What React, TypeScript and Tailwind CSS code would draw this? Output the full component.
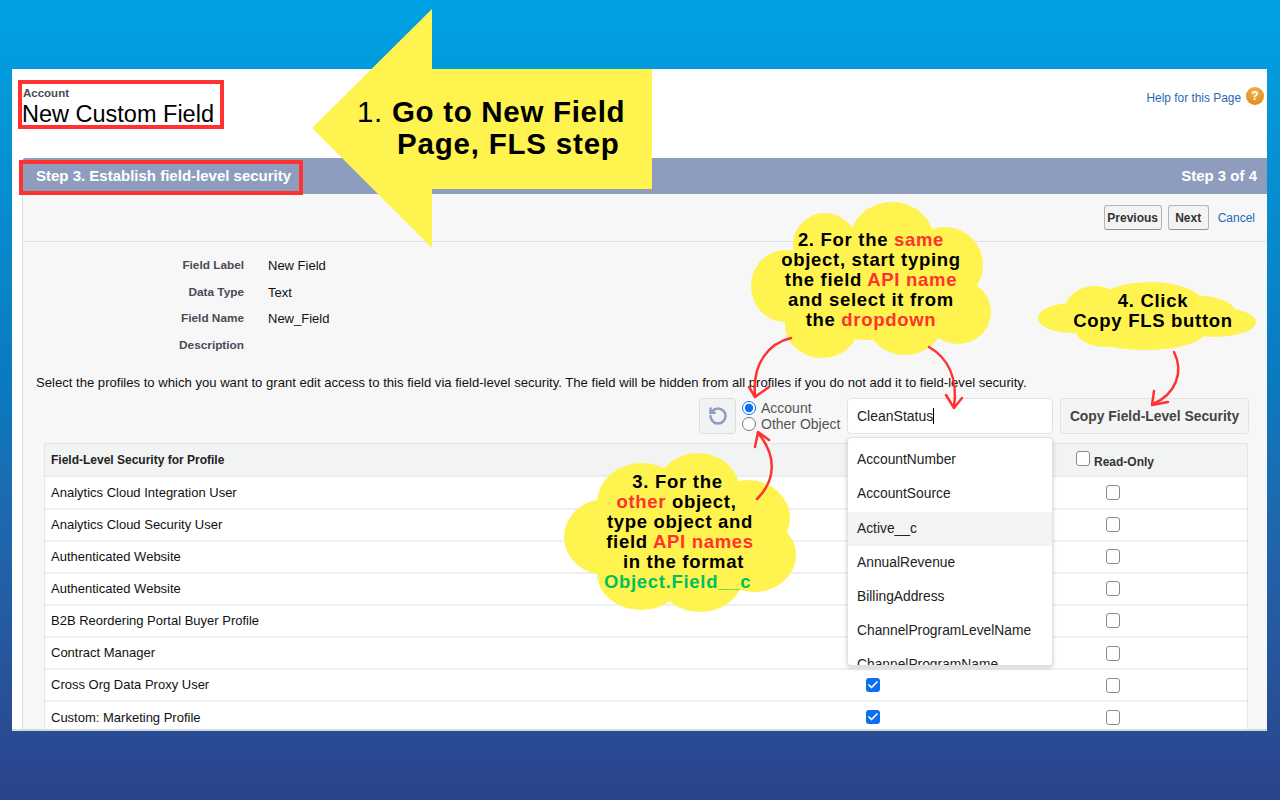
import { Check, RotateCcw } from 'lucide-react';

const profiles = [
  { name: 'Analytics Cloud Integration User', edit: true },
  { name: 'Analytics Cloud Security User', edit: true },
  { name: 'Authenticated Website', edit: true },
  { name: 'Authenticated Website', edit: true },
  { name: 'B2B Reordering Portal Buyer Profile', edit: true },
  { name: 'Contract Manager', edit: true },
  { name: 'Cross Org Data Proxy User', edit: true },
  { name: 'Custom: Marketing Profile', edit: true },
];

const fields = [
  ['Field Label', 'New Field'],
  ['Data Type', 'Text'],
  ['Field Name', 'New_Field'],
  ['Description', ''],
];

const options = [
  'AccountNumber',
  'AccountSource',
  'Active__c',
  'AnnualRevenue',
  'BillingAddress',
  'ChannelProgramLevelName',
  'ChannelProgramName',
];

const YELLOW = '#fff34f';
const RED = '#ff3131';

function Box({ checked = false }: { checked?: boolean }) {
  if (checked) {
    return (
      <span className="flex h-[14px] w-[14px] items-center justify-center rounded-[3px] bg-[#0b6ff2]">
        <Check className="h-[12px] w-[12px] text-white" strokeWidth={3.5} />
      </span>
    );
  }
  return <span className="block h-[15px] w-[14px] rounded-[3px] border border-[#8a8a8a] bg-white" />;
}

function Cloud({ blobs }: { blobs: number[][] }) {
  return (
    <>
      {blobs.map(([cx, cy, rx, ry], i) => (
        <ellipse key={i} cx={cx} cy={cy} rx={rx} ry={ry ?? rx} fill={YELLOW} />
      ))}
    </>
  );
}

function RedArrow({ d, head }: { d: string; head: string }) {
  return (
    <>
      <path d={d} fill="none" stroke={RED} strokeWidth={2.5} strokeLinecap="round" />
      <path d={head} fill="none" stroke={RED} strokeWidth={2.5} strokeLinecap="round" strokeLinejoin="round" />
    </>
  );
}

function Note({ className, lines }: { className: string; lines: React.ReactNode[] }) {
  return (
    <div className={`absolute z-30 text-center text-[18.5px] font-bold leading-[20px] tracking-[0.7px] text-black ${className}`}>
      {lines.map((line, i) => (
        <div key={i} className="whitespace-nowrap">
          {line}
        </div>
      ))}
    </div>
  );
}

export default function App() {
  return (
    <div className="relative h-[800px] w-[1280px] overflow-hidden bg-gradient-to-b from-[#00a2e3] via-[#0b78bd] to-[#2a438c] px-[12px] pt-[69px] font-['Liberation_Sans',sans-serif]">
      <div className="flex h-[662px] w-[1255px] flex-col overflow-hidden border-b-2 border-[#d5d9de] bg-white">
        <div className="flex h-[89px] shrink-0 items-start justify-between pl-[10px] pr-[3px]">
          <div className="pt-[18px]">
            <div className="pl-[1px] text-[11.5px] font-bold leading-[12px] text-[#4a4a56]">Account</div>
            <div className="mt-[1px] text-[23.5px] leading-[28px] text-black">New Custom Field</div>
          </div>
          <div className="flex items-start gap-[5px] pt-[18px]">
            <span className="mt-[3px] text-[11.9px] text-[#1f69b3]">Help for this Page</span>
            <span className="flex h-[18px] w-[18px] items-center justify-center rounded-full bg-[radial-gradient(circle_at_50%_30%,#f7b547,#d9800f)] text-[12px] font-bold text-white">
              ?
            </span>
          </div>
        </div>

        <div className="ml-[10px] flex h-[36px] shrink-0 items-center justify-between rounded-tl-[4px] bg-[#8e9dbe] pl-[14px] pr-[10px] text-[15px] font-bold text-white">
          <span>Step 3. Establish field-level security</span>
          <span>Step 3 of 4</span>
        </div>

        <div className="ml-[10px] flex-1 border-l border-[#dedede] bg-[#f7f7f7]">
          <div className="flex h-[48px] items-center justify-end border-b border-[#e0e0e0] pr-[12px]">
            <button className="h-[25px] w-[58px] rounded-[3px] border border-[#b5b5b5] border-b-[#8f8f8f] bg-[#f3f3f3] text-[12px] font-bold text-[#333]">
              Previous
            </button>
            <button className="ml-[6px] h-[25px] w-[41px] rounded-[3px] border border-[#b5b5b5] border-b-[#8f8f8f] bg-[#f3f3f3] text-[12px] font-bold text-[#333]">
              Next
            </button>
            <span className="ml-[9px] text-[12px] text-[#1f69b3]">Cancel</span>
          </div>

          <div className="pt-[10.5px]">
            {fields.map(([label, value]) => (
              <div key={label} className="flex h-[26.6px] items-center">
                <div className="w-[221px] text-right text-[11.8px] font-bold text-[#4a4a56]">{label}</div>
                <div className="pl-[24px] text-[13px] text-[#111]">{value}</div>
              </div>
            ))}
          </div>

          <p className="mt-[15px] h-[18px] pl-[13px] text-[13.1px] leading-[18px] text-[#111]">
            Select the profiles to which you want to grant edit access to this field via field-level security. The field
            will be hidden from all profiles if you do not add it to field-level security.
          </p>

          <div className="mt-[6.5px] flex h-[36px] justify-end pr-[18px]">
            <button className="flex h-[36px] w-[37px] items-center justify-center rounded-[4px] border border-[#dddddd] bg-[#f1f2f4]">
              <RotateCcw className="h-[20px] w-[20px] text-[#8e9dbe]" strokeWidth={3} />
            </button>
            <div className="ml-[6px] flex w-[105px] flex-col justify-center text-[14px] leading-[16px] text-[#555]">
              <label className="flex items-center gap-[5px]">
                <input type="radio" name="target" defaultChecked className="m-0 h-[14px] w-[14px] accent-[#0b6ff2]" />
                Account
              </label>
              <label className="flex items-center gap-[5px]">
                <input type="radio" name="target" className="m-0 h-[14px] w-[14px]" />
                Other Object
              </label>
            </div>
            <div className="relative z-10">
              <div className="flex h-[36px] w-[206px] items-center rounded-[4px] border border-[#e2e2e2] bg-white pl-[9px] text-[14px] text-[#222]">
                CleanStatus
                <span className="h-[16px] w-px bg-black" />
              </div>
              <div className="absolute left-0 top-[39px] h-[229px] w-[206px] overflow-hidden rounded-[4px] border border-[#e2e2e2] bg-white pt-[5px] shadow-[0_2px_4px_rgba(0,0,0,0.18)]">
                {options.map((option) => (
                  <div
                    key={option}
                    className={`flex h-[34.2px] shrink-0 items-center pl-[9px] text-[13.8px] text-[#222] ${
                      option === 'Active__c' ? 'bg-[#f3f3f3]' : ''
                    }`}
                  >
                    {option}
                  </div>
                ))}
              </div>
            </div>
            <button className="ml-[7px] h-[36px] w-[189px] rounded-[4px] border border-[#e2e2e2] bg-[#f4f4f4] text-[13.85px] font-bold text-[#444]">
              Copy Field-Level Security
            </button>
          </div>

          <div className="ml-[21px] mt-[9px] w-[1204px] border-x border-t border-[#e6e6e6] bg-white">
            <div className="grid h-[33px] grid-cols-[708px_240px_240px_1fr] items-center border-b-2 border-[#ececec] bg-[#f2f3f3]">
              <div className="pl-[6px] text-[12px] font-bold text-[#222]">Field-Level Security for Profile</div>
              <div />
              <div className="flex items-center justify-center gap-[4px] pl-[4px]">
                <span className="mt-[-3px]">
                  <Box />
                </span>
                <span className="mt-[5px] text-[12px] font-bold text-[#333]">Read-Only</span>
              </div>
            </div>
            {profiles.map((profile, i) => (
              <div
                key={i}
                className="grid h-[32.14px] grid-cols-[708px_240px_240px_1fr] items-center border-b-2 border-[#f0f0f0]"
              >
                <div className="pl-[6px] text-[13px] text-[#111]">{profile.name}</div>
                <div className="flex justify-center">
                  <Box checked={profile.edit} />
                </div>
                <div className="flex justify-center">
                  <Box />
                </div>
              </div>
            ))}
          </div>
        </div>
      </div>

      {/* annotations drawn on top of the page */}
      <div className="absolute left-[18px] top-[80px] z-20 h-[49px] w-[206px] border-4 border-[#ff3131]" />
      <div className="absolute left-[19px] top-[160px] z-20 h-[35px] w-[284px] border-4 border-[#ff3131]" />

      <svg className="pointer-events-none absolute left-0 top-0 z-20" width="1280" height="800" viewBox="0 0 1280 800">
        <polygon points="312,128 432,9 432,69 652,69 652,189 432,189 432,248" fill={YELLOW} />
        <Cloud
          blobs={[
            [825, 245, 32, 32],
            [892, 240, 42, 38],
            [785, 286, 34, 36],
            [945, 265, 38, 38],
            [958, 312, 33, 32],
            [822, 325, 37, 33],
            [905, 322, 38, 33],
            [870, 285, 85, 55],
          ]}
        />
        <Cloud
          blobs={[
            [1095, 310, 30, 24],
            [1072, 318, 34, 15],
            [1150, 306, 55, 24],
            [1190, 311, 45, 16],
            [1215, 322, 41, 15],
            [1145, 330, 62, 20],
            [1105, 328, 30, 19],
          ]}
        />
        <Cloud
          blobs={[
            [642, 503, 45, 40],
            [698, 491, 42, 38],
            [748, 518, 42, 38],
            [605, 537, 41, 38],
            [754, 555, 42, 37],
            [641, 573, 44, 37],
            [700, 576, 43, 36],
            [680, 535, 80, 60],
          ]}
        />
        <RedArrow d="M791 338 C770 343 752 362 755 396" head="M749 387 L755 397 L769 387" />
        <RedArrow d="M929 347 C948 358 958 378 954 407" head="M946 395 L954 408 L962 398" />
        <RedArrow d="M1174 352 C1184 372 1176 394 1153 404" head="M1154 391 L1152 405 L1168 402" />
        <RedArrow d="M757 499 C776 480 777 456 758 433" head="M755 447 L758 432 L769 440" />
      </svg>

      <div className="absolute left-[357px] top-[94px] z-30 whitespace-nowrap text-[29.5px] leading-[36px] tracking-[0.7px] text-black">
        1. <span className="font-bold">Go to New Field</span>
      </div>
      <div className="absolute left-[397px] top-[126px] z-30 whitespace-nowrap text-[29.5px] font-bold leading-[36px] tracking-[0.8px] text-black">
        Page, FLS step
      </div>

      <Note
        className="left-[771px] top-[230px] w-[200px]"
        lines={[
          <>
            2. For the <span className="text-[#ff3131]">same</span>
          </>,
          'object, start typing',
          <>
            the field <span className="text-[#ff3131]">API name</span>
          </>,
          'and select it from',
          <>
            the <span className="text-[#ff3131]">dropdown</span>
          </>,
        ]}
      />
      <Note className="left-[1053px] top-[291px] w-[200px]" lines={['4. Click', 'Copy FLS button']} />
      <Note
        className="left-[580px] top-[472px] w-[200px]"
        lines={[
          <span className="pr-[5px]">3. For the</span>,
          <span className="pr-[7px]">
            <span className="text-[#ff3131]">other</span> object,
          </span>,
          'type object and',
          <>
            field <span className="text-[#ff3131]">API names</span>
          </>,
          <span className="pl-[7px]">in the format</span>,
          <span className="pr-[5px] text-[#00bf63]">Object.Field__c</span>,
        ]}
      />
    </div>
  );
}
